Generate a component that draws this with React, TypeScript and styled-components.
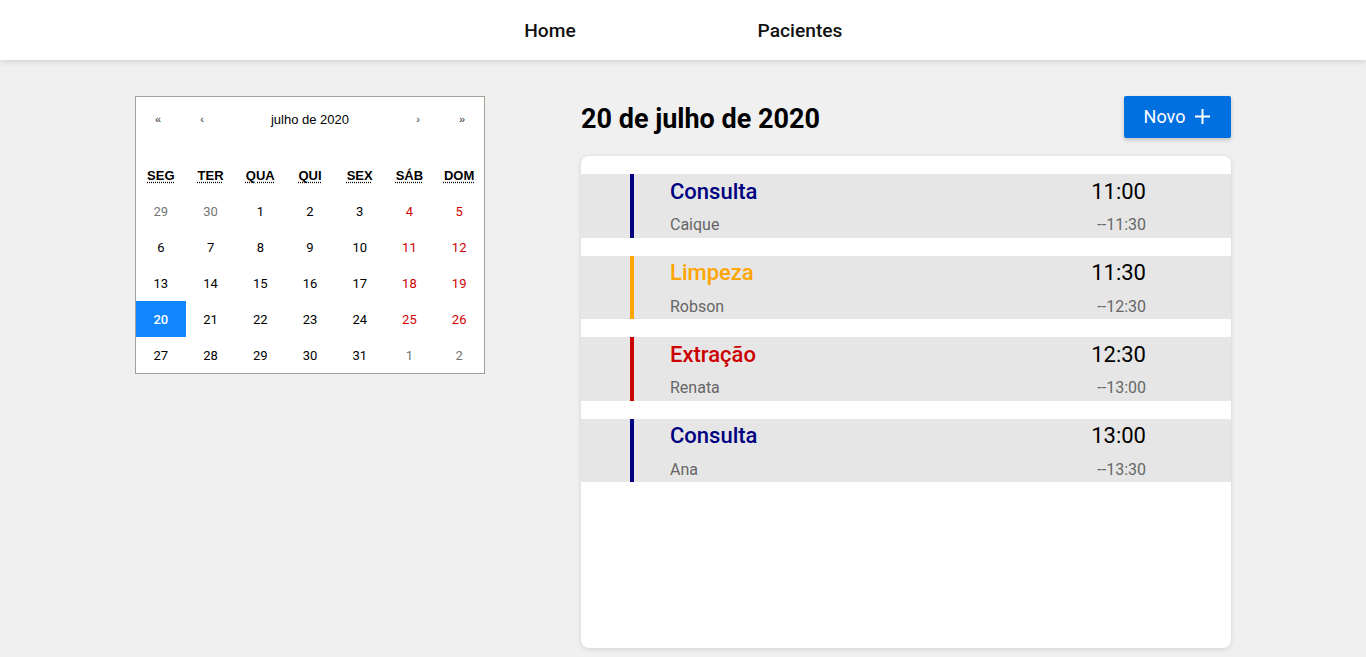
import React from "react";
import styled, { createGlobalStyle } from "styled-components";

const GlobalStyle = createGlobalStyle`
  * { box-sizing: border-box; }
  html, body { margin: 0; padding: 0; }
  body {
    background: #f0f0f0;
    font-family: Roboto, "Liberation Sans", Arial, sans-serif;
    color: #000;
    height: 657px;
    overflow: hidden;
  }
`;

const NavBar = styled.header`
  height: 60px;
  background: #fff;
  box-shadow: 0 2px 5px rgba(0, 0, 0, 0.12);
  display: flex;
  justify-content: center;
  align-items: center;
  padding-right: 16px;
  position: relative;
  z-index: 1;
`;

const NavLink = styled.a`
  width: 250px;
  text-align: center;
  font-size: 19.2px;
  font-weight: 500;
  color: #111;
  text-decoration: none;
  cursor: pointer;
`;

const Main = styled.main`
  width: 1096px;
  margin: 36px auto 0;
  display: flex;
  align-items: flex-start;
  gap: 96px;
`;

const CalendarBox = styled.div`
  width: 350px;
  background: #fff;
  border: 1px solid #a0a096;
  font-family: "Liberation Sans", Arial, sans-serif;
`;

const CalNav = styled.div`
  display: flex;
  height: 44px;
  margin-bottom: 16px;
`;

const CalNavButton = styled.button<{ $grow?: boolean }>`
  min-width: 44px;
  flex: ${(p) => (p.$grow ? 1 : "0 0 44px")};
  background: none;
  border: 0;
  font-family: "Liberation Sans", Arial, sans-serif;
  font-size: ${(p) => (p.$grow ? "13px" : "11px")};
  color: ${(p) => (p.$grow ? "#000" : "#333")};
  padding: 0;
  cursor: pointer;
`;

const Weekdays = styled.div`
  display: grid;
  grid-template-columns: repeat(7, 1fr);
`;

const Weekday = styled.div`
  height: 36px;
  display: flex;
  align-items: center;
  justify-content: center;
  font-size: 13px;
  font-weight: bold;
  text-transform: uppercase;

  abbr {
    text-decoration: underline dotted;
    text-underline-offset: 2px;
  }
`;

const Days = styled.div`
  display: grid;
  grid-template-columns: repeat(7, 1fr);
`;

const Day = styled.button<{ $tone: "normal" | "weekend" | "other" | "active" }>`
  height: 36px;
  border: 0;
  padding: 0;
  font-family: Roboto, sans-serif;
  font-size: 13px;
  font-weight: ${(p) => (p.$tone === "active" ? 500 : 400)};
  background: ${(p) => (p.$tone === "active" ? "#1087ff" : "transparent")};
  color: ${(p) =>
    p.$tone === "active"
      ? "#fff"
      : p.$tone === "weekend"
      ? "#d10000"
      : p.$tone === "other"
      ? "#757575"
      : "#000"};
  cursor: pointer;
`;

const Agenda = styled.section`
  width: 650px;
  display: flex;
  flex-direction: column;
`;

const AgendaHeader = styled.div`
  height: 42px;
  display: flex;
  align-items: center;
  justify-content: space-between;
  margin-bottom: 18px;
`;

const DateTitle = styled.h2`
  margin: 3px 0 0;
  font-size: 27px;
  font-weight: 700;
  color: #000;
`;

const NewButton = styled.button`
  width: 107px;
  height: 42px;
  border: 0;
  border-radius: 2px;
  background: #006fe0;
  color: #fff;
  font-family: Roboto, sans-serif;
  font-size: 18px;
  display: flex;
  align-items: center;
  justify-content: center;
  gap: 9px;
  padding-bottom: 2px;
  box-shadow: 0 2px 4px rgba(0, 0, 0, 0.2);
  cursor: pointer;
`;

const Card = styled.div`
  height: 492px;
  background: #fff;
  border-radius: 8px;
  box-shadow: 0 1px 5px rgba(0, 0, 0, 0.13);
  padding-top: 18px;
  display: flex;
  flex-direction: column;
  gap: 18px;
`;

const Item = styled.div<{ $color: string }>`
  height: 63.6px;
  background: #e6e6e6;
  padding: 0 85px 0 36px;
  border-left: 4px solid ${(p) => p.$color};
  margin-left: 49px;
  box-shadow: -49px 0 0 #e6e6e6;
  display: grid;
  grid-template-columns: 1fr auto;
  grid-template-rows: 34px 1fr;
  align-items: center;
`;

const ItemTitle = styled.div<{ $color: string }>`
  font-size: 22px;
  font-weight: 500;
  color: ${(p) => p.$color};
`;

const ItemTime = styled.div`
  font-size: 22px;
  color: #000;
  text-align: right;
`;

const ItemSub = styled.div`
  font-size: 16px;
  color: #666;
  padding-top: 4px;
`;

const ItemEnd = styled.div`
  font-size: 16px;
  color: #666;
  text-align: right;
  padding-top: 4px;
`;

type Tone = "normal" | "weekend" | "other" | "active";

const weekdays = [
  ["SEG", "segunda-feira"],
  ["TER", "terça-feira"],
  ["QUA", "quarta-feira"],
  ["QUI", "quinta-feira"],
  ["SEX", "sexta-feira"],
  ["SÁB", "sábado"],
  ["DOM", "domingo"],
];

const days: { n: number; other?: boolean }[] = [
  { n: 29, other: true },
  { n: 30, other: true },
  ...Array.from({ length: 31 }, (_, i) => ({ n: i + 1 })),
  { n: 1, other: true },
  { n: 2, other: true },
];

const appointments = [
  { title: "Consulta", color: "#000080", name: "Caique", start: "11:00", end: "11:30" },
  { title: "Limpeza", color: "#ffa500", name: "Robson", start: "11:30", end: "12:30" },
  { title: "Extração", color: "#cc0000", name: "Renata", start: "12:30", end: "13:00" },
  { title: "Consulta", color: "#000080", name: "Ana", start: "13:00", end: "13:30" },
];

export default function App() {
  return (
    <>
      <GlobalStyle />
      <NavBar>
        <NavLink>Home</NavLink>
        <NavLink>Pacientes</NavLink>
      </NavBar>
      <Main>
        <CalendarBox>
          <CalNav>
            <CalNavButton>«</CalNavButton>
            <CalNavButton>‹</CalNavButton>
            <CalNavButton $grow>julho de 2020</CalNavButton>
            <CalNavButton>›</CalNavButton>
            <CalNavButton>»</CalNavButton>
          </CalNav>
          <Weekdays>
            {weekdays.map(([s, full]) => (
              <Weekday key={s}>
                <abbr title={full}>{s}</abbr>
              </Weekday>
            ))}
          </Weekdays>
          <Days>
            {days.map((d, i) => {
              const col = i % 7;
              let tone: Tone = "normal";
              if (d.other) tone = "other";
              else if (d.n === 20) tone = "active";
              else if (col >= 5) tone = "weekend";
              return (
                <Day key={i} $tone={tone}>
                  {d.n}
                </Day>
              );
            })}
          </Days>
        </CalendarBox>
        <Agenda>
          <AgendaHeader>
            <DateTitle>20 de julho de 2020</DateTitle>
            <NewButton>
              Novo
              <svg width="17" height="17" viewBox="0 0 17 17" fill="none" stroke="#fff" strokeWidth="2">
                <path d="M8.5 1v15M1 8.5h15" />
              </svg>
            </NewButton>
          </AgendaHeader>
          <Card>
            {appointments.map((a, i) => (
              <Item key={i} $color={a.color}>
                <ItemTitle $color={a.color}>{a.title}</ItemTitle>
                <ItemTime>{a.start}</ItemTime>
                <ItemSub>{a.name}</ItemSub>
                <ItemEnd>--{a.end}</ItemEnd>
              </Item>
            ))}
          </Card>
        </Agenda>
      </Main>
    </>
  );
}
